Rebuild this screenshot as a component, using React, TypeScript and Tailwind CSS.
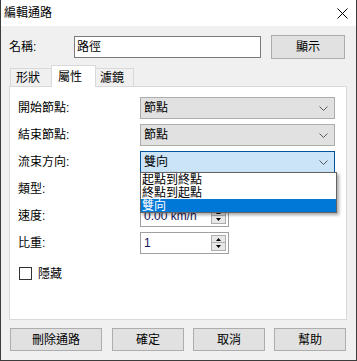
import React from "react"

const font = "font-['Liberation_Sans','Noto_Sans_CJK_TC',sans-serif] text-[12px] leading-none text-black"

function Chevron() {
  return (
    <svg width="9" height="5" viewBox="0 0 9 5" className="shrink-0">
      <path d="M0.5 0.5 L4.5 4.5 L8.5 0.5" fill="none" stroke="#5a5a5a" strokeWidth="1" />
    </svg>
  )
}

function Select({ value, open }: { value: string; open?: boolean }) {
  return (
    <div
      className={
        open
          ? "flex h-[22px] w-[195px] items-center justify-between border border-[#005499] bg-[#cce4f7] pl-[3px] pr-[6px]"
          : "flex h-[22px] w-[195px] items-center justify-between border border-[#adadad] bg-[#e1e1e1] pl-[3px] pr-[6px]"
      }
    >
      <span>{value}</span>
      <Chevron />
    </div>
  )
}

function Spinner({ value }: { value: string }) {
  return (
    <div className="flex h-[22px] w-[89px] items-center justify-between border border-[#a0a0a0] bg-white pl-[3px] pr-[2px]">
      <span className="text-[#14145a]">{value}</span>
      <div className="flex flex-col">
        <div className="flex h-[8px] w-[15px] items-center justify-center border border-[#adadad] bg-[#e8e8e8]">
          <svg width="5" height="3" viewBox="0 0 5 3">
            <path d="M0 3 L2.5 0 L5 3 Z" fill="#000" />
          </svg>
        </div>
        <div className="flex h-[8px] w-[15px] items-center justify-center border border-t-0 border-[#adadad] bg-[#e8e8e8]">
          <svg width="5" height="3" viewBox="0 0 5 3">
            <path d="M0 0 L5 0 L2.5 3 Z" fill="#000" />
          </svg>
        </div>
      </div>
    </div>
  )
}

function Row({ label, children }: { label: string; children: React.ReactNode }) {
  return (
    <div className="flex h-[22px] items-center">
      <div className="w-[122px]">{label}</div>
      {children}
    </div>
  )
}

function Button({ label, w, ml }: { label: string; w: string; ml: string }) {
  return (
    <div className={`flex h-[23px] items-center justify-center border border-[#adadad] bg-[#e1e1e1] ${w} ${ml}`}>
      {label}
    </div>
  )
}

export default function App() {
  return (
    <div className={`relative flex h-[361px] w-[357px] flex-col border-x border-b border-[#3c3c3c] ${font}`}>
      {/* title bar */}
      <div className="flex h-[26px] items-center justify-between bg-white pl-[3px] pr-[8px]">
        <span>編輯通路</span>
        <svg width="11" height="11" viewBox="0 0 11 11">
          <path d="M0.5 0.5 L10.5 10.5 M10.5 0.5 L0.5 10.5" stroke="#000" strokeWidth="1" />
        </svg>
      </div>

      <div className="flex flex-1 flex-col bg-[#f0f0f0]">
        {/* name */}
        <div className="mt-[9px] flex h-[24px] items-center pl-[8px]">
          <div className="w-[65px]">名稱:</div>
          <div className="flex h-[22px] w-[187px] items-center border border-[#7a7a7a] bg-white pl-[2px]">路徑</div>
          <div className="ml-[10px] flex h-[24px] w-[74px] items-center justify-center border border-[#adadad] bg-[#e1e1e1]">
            顯示
          </div>
        </div>

        {/* tabs */}
        <div className="mt-[6px] flex h-[21px] items-end pl-[9px]">
          <div className="flex h-[18px] w-[42px] items-center border border-b-0 border-[#d9d9d9] bg-[#f0f0f0] pl-[5px]">
            形狀
          </div>
          <div className="relative z-10 -mb-px -ml-px flex h-[22px] w-[45px] items-center border border-b-0 border-[#d9d9d9] bg-white pl-[6px]">
            屬性
          </div>
          <div className="flex h-[18px] w-[38px] items-center border border-b-0 border-l-0 border-[#d9d9d9] bg-[#f0f0f0] pl-[4px]">
            濾鏡
          </div>
        </div>

        {/* panel */}
        <div className="ml-[8px] flex h-[234px] w-[338px] flex-col border border-[#d9d9d9] bg-white pl-[8px] pt-[10px]">
          <div className="flex flex-col gap-[5px]">
            <Row label="開始節點:">
              <Select value="節點" />
            </Row>
            <Row label="結束節點:">
              <Select value="節點" />
            </Row>
            <Row label="流束方向:">
              <Select value="雙向" open />
            </Row>
            <Row label="類型:">
              <Select value="" />
            </Row>
            <Row label="速度:">
              <Spinner value="0.00 km/h" />
            </Row>
            <Row label="比重:">
              <Spinner value="1" />
            </Row>
          </div>
          <div className="mt-[13px] flex h-[13px] items-center pl-[1px]">
            <div className="h-[13px] w-[13px] border border-[#333] bg-white" />
            <span className="ml-[6px]">隱藏</span>
          </div>
        </div>

        {/* buttons */}
        <div className="mt-[8px] flex">
          <Button label="刪除通路" w="w-[92px]" ml="ml-[9px]" />
          <Button label="確定" w="w-[72px]" ml="ml-[10px]" />
          <Button label="取消" w="w-[72px]" ml="ml-[9px]" />
          <Button label="幫助" w="w-[72px]" ml="ml-[9px]" />
        </div>
      </div>

      {/* open dropdown list */}
      <div className="absolute left-[139px] top-[172px] z-20 flex w-[197px] flex-col border border-[#646464] bg-white shadow-[2px_2px_3px_rgba(0,0,0,0.35)]">
        <div className="flex h-[13px] items-center pl-[1px]">起點到終點</div>
        <div className="flex h-[13px] items-center pl-[1px]">終點到起點</div>
        <div className="flex h-[13px] items-center bg-[#0078d7] pl-[1px] text-white">雙向</div>
      </div>
    </div>
  )
}
